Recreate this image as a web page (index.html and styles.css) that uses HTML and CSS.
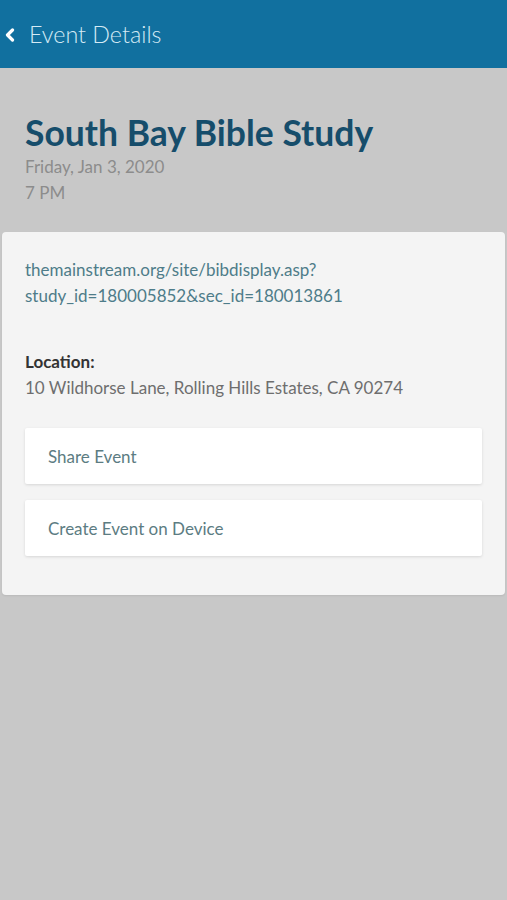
FILE: index.html
```html
<!DOCTYPE html>
<html>
<head>
<meta charset="utf-8">
<link rel="stylesheet" href="styles.css">
</head>
<body>
<header class="topbar">
  <svg class="back" width="12" height="14" viewBox="0 0 12 14"><path d="M8.5 2 L3.5 7 L8.5 12" fill="none" stroke="#ffffff" stroke-width="3.2" stroke-linecap="round" stroke-linejoin="round"/></svg>
  <span class="topbar-title">Event Details</span>
</header>
<main class="page">
  <section class="hero">
    <h1 class="title">South Bay Bible Study</h1>
    <div class="meta">Friday, Jan 3, 2020</div>
    <div class="meta">7 PM</div>
  </section>
  <section class="card">
    <div class="link">themainstream.org/site/bibdisplay.asp?<br>study_id=180005852&amp;sec_id=180013861</div>
    <div class="label">Location:</div>
    <div class="address">10 Wildhorse Lane, Rolling Hills Estates, CA 90274</div>
    <div class="buttons">
      <div class="btn">Share Event</div>
      <div class="btn">Create Event on Device</div>
    </div>
  </section>
</main>
</body>
</html>
```
FILE: styles.css
```css
* { box-sizing: border-box; }
html, body { margin: 0; padding: 0; }
body {
  background: #c8c8c8;
  font-family: Lato, "Open Sans", sans-serif;
  width: 507px;
  height: 900px;
  overflow: hidden;
}
.topbar {
  height: 68px;
  background: #11709f;
  display: flex;
  align-items: center;
  padding-left: 4px;
  gap: 13px;
}
.back { margin-top: 2px; }
.topbar-title {
  color: #d4eaf5;
  font-size: 23.3px;
  font-weight: 300;
}
.page { padding: 0 2px; }
.hero { padding: 44px 23px 26px; }
.title {
  margin: 0;
  font-size: 35.5px;
  font-weight: 700;
  color: #164d6b;
  line-height: 42px;
}
.meta {
  color: #8c8c8c;
  font-size: 17px;
  line-height: 26px;
}
.card {
  background: #f4f4f4;
  border-radius: 4px;
  padding: 25px 23px 39px;
  box-shadow: 0 1px 2px rgba(0,0,0,0.08);
}
.link {
  color: #4e7c89;
  font-size: 17px;
  line-height: 26px;
}
.label {
  margin-top: 40px;
  color: #333;
  font-weight: 700;
  font-size: 17px;
  line-height: 26px;
}
.address {
  color: #6e6e6e;
  font-size: 17px;
  line-height: 26px;
}
.buttons {
  margin-top: 27px;
  display: flex;
  flex-direction: column;
  gap: 16px;
}
.btn {
  background: #ffffff;
  height: 56px;
  display: flex;
  align-items: center;
  padding-left: 23px;
  color: #5c7c82;
  font-size: 17px;
  border-radius: 2px;
  box-shadow: 0 1px 3px rgba(0,0,0,0.12);
}
```
